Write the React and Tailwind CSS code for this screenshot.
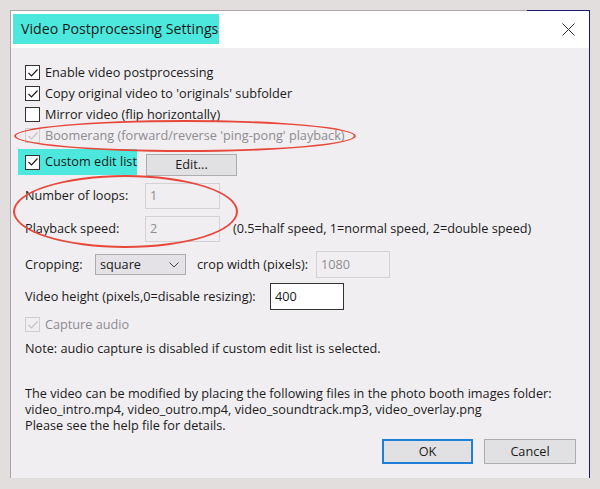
import React from 'react';

const font = { fontFamily: '"Open Sans", "Noto Sans", sans-serif' };

const Check = ({ disabled }) => (
  <svg width="12" height="12" viewBox="0 0 12 12" className="block">
    <polyline
      points="1.5,6 4.5,9 10.5,2.5"
      fill="none"
      stroke={disabled ? '#c4c2c6' : '#1a1a1a'}
      strokeWidth="1.2"
    />
  </svg>
);

const Box = ({ checked, disabled }) => (
  <span
    className={`flex items-center justify-center w-[15px] h-[15px] border shrink-0 ${
      disabled ? 'border-[#cfcdd1] bg-[#f0eef1]' : 'border-[#333333] bg-white'
    }`}
  >
    {checked && <Check disabled={disabled} />}
  </span>
);

const CheckRow = ({ label, checked, disabled }) => (
  <div className="flex items-center h-[21px] pl-[14px]">
    <Box checked={checked} disabled={disabled} />
    <span className={`ml-[5px] whitespace-nowrap ${disabled ? 'text-[#8e8c90]' : 'text-[#1b1b1b]'}`}>{label}</span>
  </div>
);

const Field = ({ value, disabled, w = 'w-[75px]', h = 'h-[26px]' }) => (
  <div
    className={`${w} ${h} flex items-center px-[4px] border shrink-0 ${
      disabled ? 'border-[#d4d2d6] text-[#8e8c90]' : 'border-[#333333] bg-white text-[#1b1b1b]'
    }`}
  >
    {value}
  </div>
);

export default function App() {
  return (
    <div className="w-[600px] h-[489px] bg-[#e2dedd] pt-[10px] pl-[10px] overflow-hidden text-[12.7px]" style={font}>
      <div className="relative w-[580px] h-[468px] flex flex-col border-l border-r border-l-[#a9a4a4] border-r-[#1c1a6a] bg-[#f0eef1]">
        {/* top border */}
        <div className="flex h-px shrink-0">
          <div className="flex-1 bg-[#aca7a7]" />
          <div className="w-[62px] bg-[#1c1a6a]" />
        </div>

        {/* title bar */}
        <div className="h-[37px] bg-white flex items-start justify-between shrink-0">
          <div className="ml-[2px] mt-[3px] h-[30px] w-[206px] bg-[#4de8dd] flex items-center pl-[8px] text-[14.2px] text-[#1b1b1b] whitespace-nowrap">
            Video Postprocessing Settings
          </div>
          <svg width="13" height="13" viewBox="0 0 13 13" className="mt-[12px] mr-[14px]">
            <path d="M0.5 0.5 L12.5 12.5 M12.5 0.5 L0.5 12.5" stroke="#333" strokeWidth="1" />
          </svg>
        </div>

        {/* body */}
        <div className="flex flex-col pt-[14px] text-[#1b1b1b] whitespace-nowrap">
          <CheckRow label="Enable video postprocessing" checked />
          <CheckRow label="Copy original video to 'originals' subfolder" checked />
          <CheckRow label="Mirror video (flip horizontally)" />
          <CheckRow label="Boomerang (forward/reverse 'ping-pong' playback)" checked disabled />

          <div className="flex items-start mt-[3px] h-[27px]">
            <div className="ml-[7px] h-[26px] w-[119px] bg-[#4de8dd] flex items-center pl-[7px] shrink-0">
              <Box checked />
              <span className="ml-[5px]">Custom edit list</span>
            </div>
            <div className="ml-[9px] mt-[5px] w-[91px] h-[22px] bg-[#e1e0e3] border border-[#adadad] flex items-center justify-center">
              Edit...
            </div>
          </div>

          <div className="flex items-center mt-[7px] pl-[14px] h-[26px]">
            <span className="w-[120px]">Number of loops:</span>
            <Field value="1" disabled />
          </div>

          <div className="flex items-center mt-[7px] pl-[14px] h-[26px]">
            <span className="w-[120px]">Playback speed:</span>
            <Field value="2" disabled />
            <span className="ml-[13px]">(0.5=half speed, 1=normal speed, 2=double speed)</span>
          </div>

          <div className="flex items-center mt-[9px] pl-[14px] h-[27px]">
            <span className="w-[70px]">Cropping:</span>
            <div className="w-[91px] h-[21px] bg-[#e4e2e6] border border-[#adadad] flex items-center justify-between pl-[4px] pr-[6px]">
              <span>square</span>
              <svg width="10" height="6" viewBox="0 0 10 6">
                <polyline points="0.5,0.5 5,5 9.5,0.5" fill="none" stroke="#444" strokeWidth="1" />
              </svg>
            </div>
            <span className="ml-[11px] w-[119px]">crop width (pixels):</span>
            <Field value="1080" disabled w="w-[74px]" h="h-[27px]" />
          </div>

          <div className="flex items-center mt-[5px] pl-[14px] h-[27px]">
            <span className="w-[245px]">Video height (pixels,0=disable resizing):</span>
            <Field value="400" w="w-[74px]" h="h-[27px]" />
          </div>

          <div className="mt-[4px]">
            <CheckRow label="Capture audio" checked disabled />
          </div>

          <div className="mt-[5px] h-[18px] pl-[14px] flex items-center">
            Note: audio capture is disabled if custom edit list is selected.
          </div>

          <div className="mt-[27px] pl-[14px] leading-[16px]">
            <div>The video can be modified by placing the following files in the photo booth images folder:</div>
            <div>video_intro.mp4, video_outro.mp4, video_soundtrack.mp3, video_overlay.png</div>
            <div>Please see the help file for details.</div>
          </div>

          <div className="mt-[6px] flex justify-end gap-[11px] pr-[13px]">
            <div className="w-[91px] h-[25px] bg-[#e1e0e3] border-2 border-[#1f7fd8] flex items-center justify-center">
              OK
            </div>
            <div className="w-[92px] h-[25px] bg-[#e1e0e3] border border-[#adadad] flex items-center justify-center">
              Cancel
            </div>
          </div>
        </div>

        {/* red annotation ellipses */}
        <div className="absolute left-[3px] top-[110px] w-[342px] h-[32px] rounded-[50%] border-2 border-[#e8473b] pointer-events-none" />
        <div className="absolute left-[2px] top-[165px] w-[225px] h-[73px] rounded-[50%] border-2 border-[#e8473b] pointer-events-none" />
      </div>
    </div>
  );
}
